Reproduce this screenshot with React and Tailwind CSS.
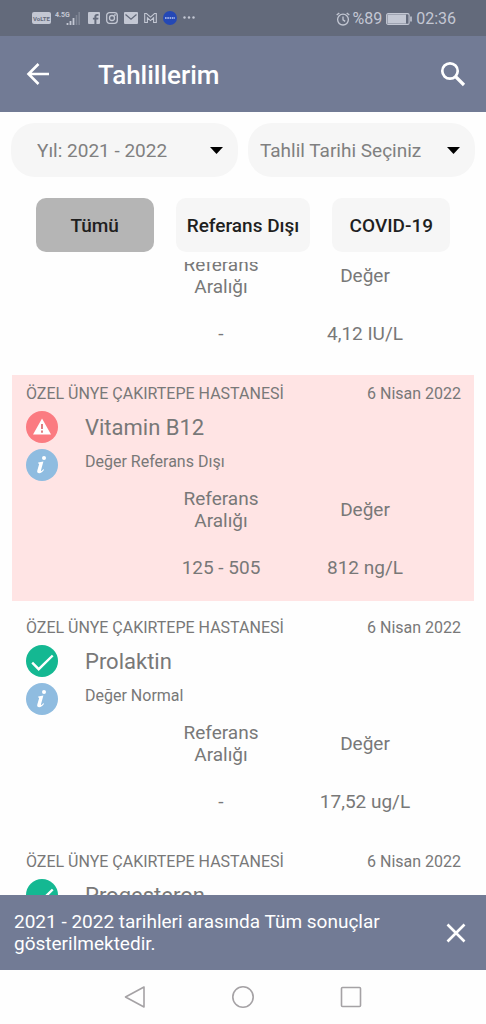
import React, { useLayoutEffect, useRef, useState } from 'react';

const HOSPITAL = 'ÖZEL ÜNYE ÇAKIRTEPE HASTANESİ';

const results = [
  { id: 1, name: 'FSH', date: '6 Nisan 2022', range: '-', value: '4,12 IU/L', normal: true },
  { id: 2, name: 'Vitamin B12', date: '6 Nisan 2022', range: '125 - 505', value: '812 ng/L', normal: false },
  { id: 3, name: 'Prolaktin', date: '6 Nisan 2022', range: '-', value: '17,52 ug/L', normal: true },
  { id: 4, name: 'Progesteron', date: '6 Nisan 2022', range: '-', value: '0,21 ug/L', normal: true },
];

const filters = ['Tümü', 'Referans Dışı', 'COVID-19'];

function StatusBar() {
  return (
    <div className="flex h-9 shrink-0 items-center justify-between bg-[#636a7b] pr-[30px] pl-8 text-[#c3c7d3]">
      <div className="flex items-center">
        <span className="flex h-3 w-[19px] items-center justify-center rounded-xs bg-[#c3c7d3] text-[6px] font-bold text-[#636a7b]">
          VoLTE
        </span>
        <span className="ml-1 self-start text-[7px] leading-[8px] font-bold">4.5G</span>
        <svg className="-ml-1 h-[14px] w-[14px]" viewBox="0 0 14 14">
          <path d="M1.500 14v-2M4.500 14v-4M7.500 14V7" stroke="currentColor" strokeWidth="1.800" />
          <path d="M10.500 14V4M13.200 14V1" stroke="currentColor" strokeWidth="1.600" opacity=".3" />
        </svg>
        <svg className="ml-2 h-3 w-3" viewBox="0 0 12 12">
          <path d="M1 0h10a1 1 0 0 1 1 1v10a1 1 0 0 1-1 1H8.400V7.600h1.800l.3-1.900H8.400V4.700c0-.7.3-1 1-1h1.100V2H9C7.300 2 6.400 3 6.400 4.500v1.200H4.900v1.900h1.500V12H1a1 1 0 0 1-1-1V1a1 1 0 0 1 1-1z" fill="currentColor" />
        </svg>
        <svg className="ml-[6px] h-3 w-3" viewBox="0 0 12 12" fill="none" stroke="currentColor" strokeWidth="1.300">
          <rect x=".7" y=".7" width="10.600" height="10.600" rx="2.800" />
          <circle cx="6" cy="6" r="2.500" />
          <circle cx="9" cy="3" r=".3" />
        </svg>
        <svg className="ml-[6px] h-3 w-[14px]" viewBox="0 0 14 12">
          <rect width="14" height="12" rx="1" fill="currentColor" />
          <path d="M1.500 2.500 7 7.200l5.500-4.700" fill="none" stroke="#636a7b" strokeWidth="1.300" />
        </svg>
        <svg className="ml-[6px] h-3 w-[13px]" viewBox="0 0 13 12" fill="none" stroke="currentColor" strokeWidth="1.100">
          <path d="M.7 10.500v-9h1.800l4 3.600 4-3.600h1.800v9H9.600V5.800L6.500 8.600 3.400 5.800v4.700z" />
        </svg>
        <svg className="ml-[6px] h-[14px] w-[14px]" viewBox="0 0 14 14">
          <circle cx="7" cy="7" r="7" fill="#2448b5" />
          <path d="M2 7h10" stroke="#b9c6ef" strokeWidth="1.400" strokeDasharray="1.600 .7" />
        </svg>
        <svg className="ml-[6px] h-3 w-3" viewBox="0 0 12 12" fill="currentColor">
          <circle cx="1.500" cy="5.500" r="1.200" />
          <circle cx="6" cy="5.500" r="1.200" />
          <circle cx="10.500" cy="5.500" r="1.200" />
        </svg>
      </div>
      <div className="flex items-center pt-[2px] text-base">
        <svg className="mr-[2px] h-[14px] w-[14px]" viewBox="0 0 14 14" fill="none" stroke="currentColor" strokeWidth="1.300">
          <circle cx="7" cy="7.600" r="5.400" />
          <path d="M7 4.500v3.300l2.200 1.600M.7 3.100 3.300.9M13.300 3.100 10.700.9" />
        </svg>
        %89
        <svg className="mx-1 h-3 w-[26px]" viewBox="0 0 26 12">
          <rect x=".6" y=".6" width="22.500" height="10.800" rx="1.500" fill="none" stroke="currentColor" strokeWidth="1.100" />
          <rect x="1.500" y="1.500" width="18.500" height="9" fill="currentColor" />
          <path d="M25 3.500v5" stroke="currentColor" strokeWidth="1.600" />
        </svg>
        02:36
      </div>
    </div>
  );
}

function Dropdown({ label, options, className }) {
  return (
    <div className="relative">
      <select
        aria-label={label}
        className={`h-[54px] w-full appearance-none rounded-[24px] bg-[#f6f6f6] pt-[2px] pr-8 text-[19px] text-[#808080] outline-none ${className}`}
      >
        {options.map(o => (
          <option key={o}>{o}</option>
        ))}
      </select>
      <svg className="pointer-events-none absolute top-6 right-[15px] h-[7px] w-[13px]" viewBox="0 0 13 7">
        <path d="M0 0h13L6.500 7z" fill="#000" />
      </svg>
    </div>
  );
}

function StatusIcon({ normal }) {
  if (normal) {
    return (
      <svg className="h-8 w-8" viewBox="0 0 32 32">
        <circle cx="16" cy="16" r="16" fill="#14b892" />
        <path d="M6.200 17.700 12.700 24.200 26.700 10.500" fill="none" stroke="#fff" strokeWidth="2.400" />
      </svg>
    );
  }
  return (
    <svg className="h-8 w-8" viewBox="0 0 32 32">
      <circle cx="16" cy="16" r="16" fill="#fb7b81" />
      <path d="M16 7.500 25 23.500H7z" fill="#fff" />
      <path d="M16 13v5M16 19.500v2.200" stroke="#e0797c" strokeWidth="1.900" />
    </svg>
  );
}

function InfoIcon() {
  return (
    <svg className="h-8 w-8" viewBox="0 0 32 32">
      <circle cx="16" cy="16" r="16" fill="#8fbce0" />
      <circle cx="18" cy="9" r="2" fill="#fff" />
      <path d="M12.200 13.600c1.500-.2 3.500-.6 5.200-1l-2.400 8.600c-.2.900.2 1 .8.500l1.500-1.500.8.600c-1.500 2.100-3.100 3.400-4.900 3.400-1.600 0-2.400-1.100-1.900-2.800l1.800-6.100c.2-.7-.2-.9-1-.9z" fill="#fff" />
    </svg>
  );
}

function ResultCard({ result }) {
  return (
    <li className={`pt-[9px] pb-[22px] ${result.normal ? '' : 'bg-[#ffe4e4]'}`}>
      <div className="flex justify-between pr-[13px] pl-[14px] text-base leading-5">
        <span>{HOSPITAL}</span>
        <span>{result.date}</span>
      </div>
      <div className="mt-[7px] flex gap-[27px] pl-[14px]">
        <div className="flex flex-col gap-[6px]">
          <StatusIcon normal={result.normal} />
          <button aria-label="Bilgi">
            <InfoIcon />
          </button>
        </div>
        <div className="flex flex-col gap-[6px] pt-px">
          <h2 className="text-[22px] leading-8">{result.name}</h2>
          <p className="text-base leading-6">{result.normal ? 'Değer Normal' : 'Değer Referans Dışı'}</p>
        </div>
      </div>
      <table className="mt-[7px] mr-[37px] ml-auto w-[288px] table-fixed text-center text-[19px] leading-[22px]">
        <thead>
          <tr>
            <th className="px-8 font-normal">Referans Aralığı</th>
            <th className="px-8 font-normal">Değer</th>
          </tr>
        </thead>
        <tbody>
          <tr>
            <td className="pt-[25px]">{result.range}</td>
            <td className="pt-[25px]">{result.value}</td>
          </tr>
        </tbody>
      </table>
    </li>
  );
}

export default function App() {
  const [filter, setFilter] = useState('Tümü');
  const [notice, setNotice] = useState(true);
  const listRef = useRef(null);

  useLayoutEffect(() => {
    listRef.current.scrollTop = 121;
  }, []);

  const visible = results.filter(r => {
    if (filter === 'Referans Dışı') return !r.normal;
    if (filter === 'COVID-19') return r.name.includes('COVID');
    return true;
  });

  return (
    <div className="flex h-screen flex-col bg-[#fefefe] font-[Roboto,sans-serif] text-[#787878]">
      <StatusBar />
      <header className="flex h-[76px] shrink-0 items-center bg-[#727b95] px-5 text-white">
        <button aria-label="Geri" className="p-1">
          <svg className="h-7 w-7" viewBox="0 0 28 28" fill="none" stroke="currentColor" strokeWidth="2.600">
            <path d="M25 14H5M14.500 4 4.500 14l10 10" />
          </svg>
        </button>
        <h1 className="ml-[42px] flex-1 pt-[2px] text-[26px] font-medium">Tahlillerim</h1>
        <button aria-label="Ara">
          <svg className="h-[26px] w-[26px]" viewBox="0 0 26 26" fill="none" stroke="currentColor">
            <circle cx="10" cy="10" r="7.700" strokeWidth="2.700" />
            <path d="m15.500 15.500 8.500 8.500" strokeWidth="3.200" />
          </svg>
        </button>
      </header>

      <div className="grid shrink-0 grid-cols-2 gap-[10px] px-[11px] pt-[11px]">
        <Dropdown label="Yıl" options={['Yıl: 2021 - 2022', 'Yıl: 2020 - 2021']} className="pl-[26px]" />
        <Dropdown label="Tahlil Tarihi" options={['Tahlil Tarihi Seçiniz', '6 Nisan 2022']} className="pl-3" />
      </div>

      <div className="flex shrink-0 justify-center gap-[22px] pt-[21px] pb-[10px]">
        {filters.map(f => (
          <button
            key={f}
            onClick={() => setFilter(f)}
            className={`h-[54px] min-w-[118px] rounded-[10px] px-[11px] pt-[2px] text-[19px] font-medium text-[#1f1f1f] ${
              f === filter ? 'bg-[#b5b5b5]' : 'bg-[#f6f6f6]'
            }`}
          >
            {f}
          </button>
        ))}
      </div>

      <ul
        ref={listRef}
        className="flex min-h-0 flex-1 flex-col gap-2 overflow-y-auto px-3 [scrollbar-width:none]"
      >
        {visible.map(r => (
          <ResultCard key={r.id} result={r} />
        ))}
      </ul>

      {notice && (
        <div className="flex h-[75px] shrink-0 items-center justify-between bg-[#727b95] pt-px pr-5 pl-[14px] text-[19px] leading-[22px] text-white">
          <p className="max-w-[380px]">2021 - 2022 tarihleri arasında Tüm sonuçlar gösterilmektedir.</p>
          <button aria-label="Kapat" onClick={() => setNotice(false)}>
            <svg className="h-5 w-5" viewBox="0 0 20 20" fill="none" stroke="currentColor" strokeWidth="2.600">
              <path d="m1.500 1.500 17 17M18.500 1.500l-17 17" />
            </svg>
          </button>
        </div>
      )}

      <nav className="flex h-[54px] shrink-0 items-center justify-center gap-[86px] text-[#a5a2a5]">
        <button aria-label="Geri git">
          <svg className="h-[22px] w-[22px]" viewBox="0 0 22 22" fill="none" stroke="currentColor" strokeWidth="1.600" strokeLinejoin="round">
            <path d="M20 1v20L1.500 11z" />
          </svg>
        </button>
        <button aria-label="Ana ekran">
          <svg className="h-[22px] w-[22px]" viewBox="0 0 22 22" fill="none" stroke="currentColor" strokeWidth="1.600">
            <circle cx="11" cy="11" r="10.200" />
          </svg>
        </button>
        <button aria-label="Son uygulamalar">
          <svg className="h-[22px] w-[22px]" viewBox="0 0 22 22" fill="none" stroke="currentColor" strokeWidth="1.600">
            <rect x="1.500" y="1.500" width="19" height="19" rx="1" />
          </svg>
        </button>
      </nav>
    </div>
  );
}
